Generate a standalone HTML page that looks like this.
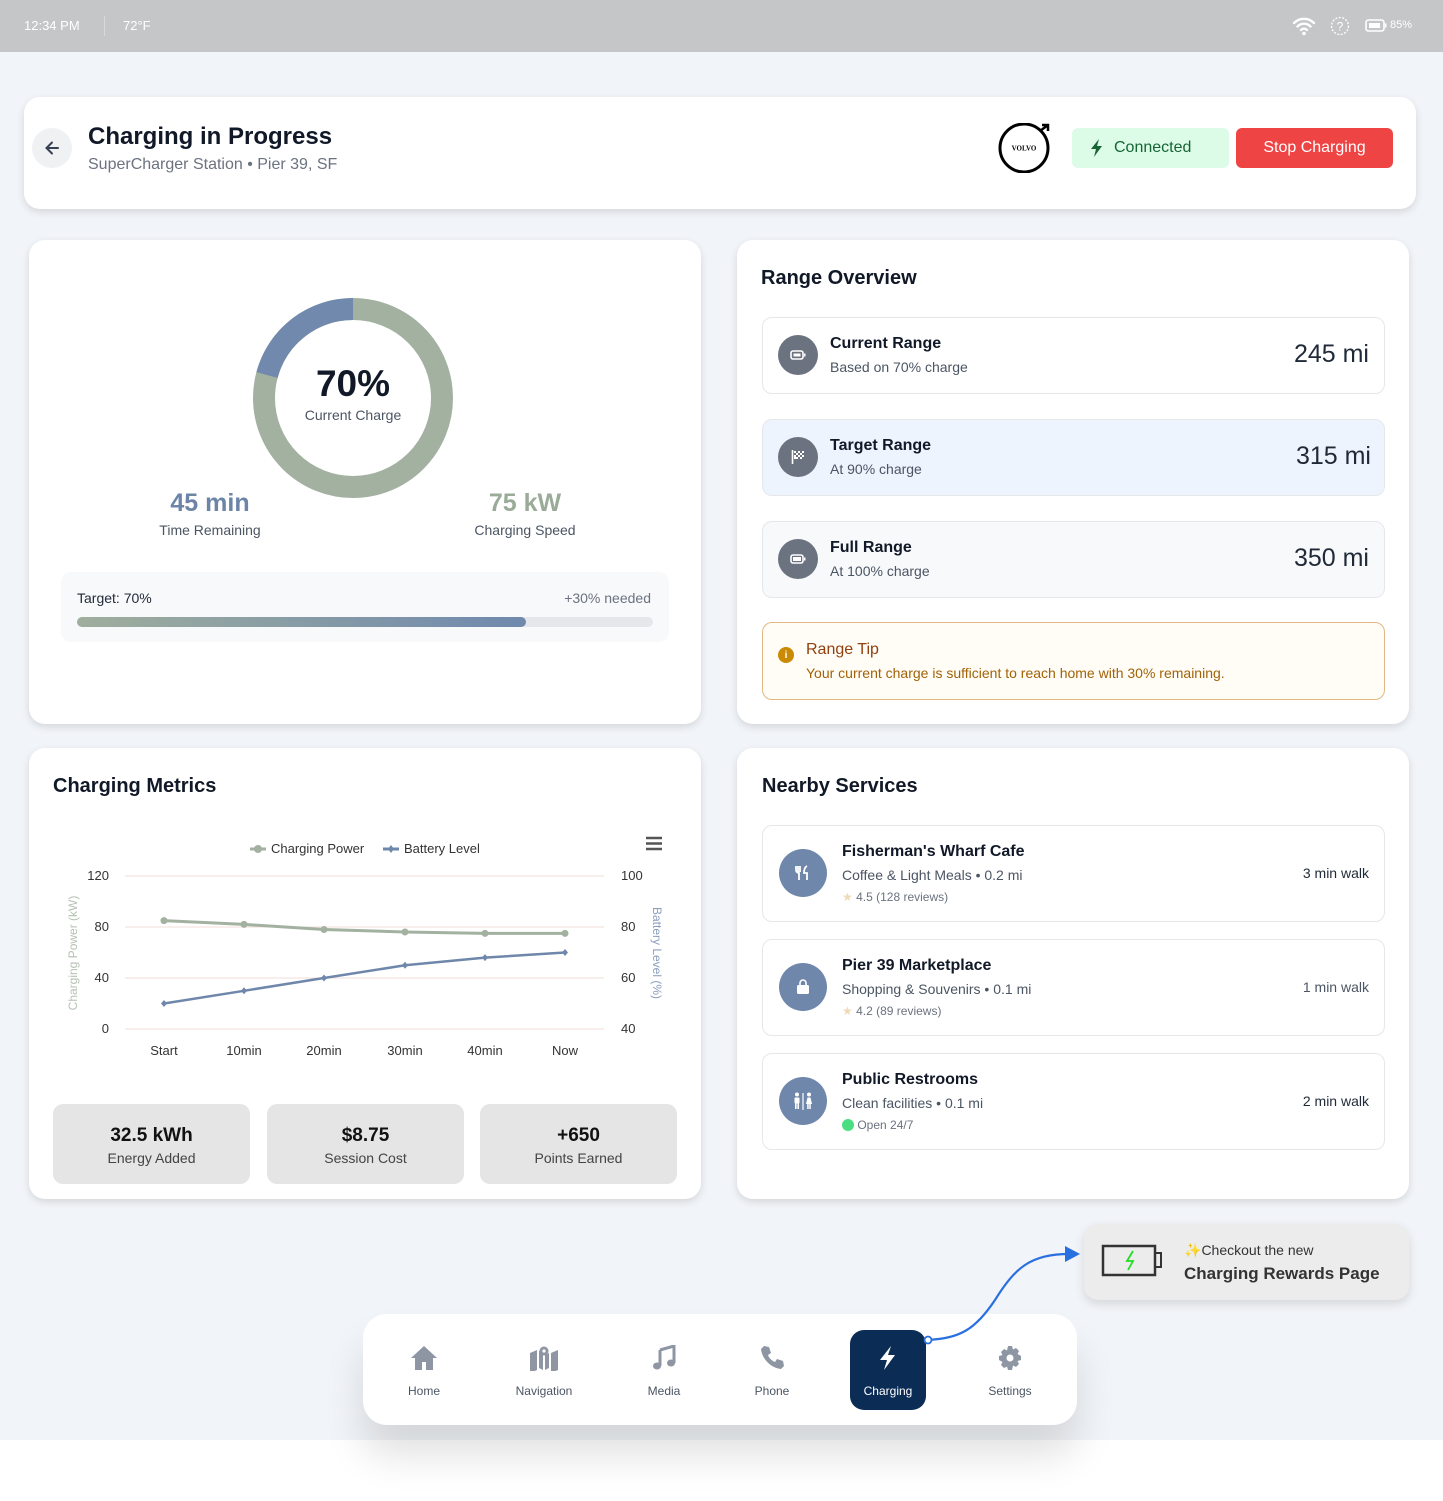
<!DOCTYPE html>
<html><head><meta charset="utf-8"><style>
*{box-sizing:border-box;margin:0;padding:0}
body{width:1443px;height:1501px;background:#fff;font-family:"Liberation Sans",sans-serif;position:relative;overflow:hidden;color:#111827}
.bg{position:absolute;left:0;top:0;width:1443px;height:1440px;background:#f1f4f8}
.status{position:absolute;left:0;top:0;width:1443px;height:52px;background:#c4c6c8;color:#fff;font-size:13px}
.abs{position:absolute}
.card{position:absolute;background:#fff;border-radius:16px;box-shadow:0 3px 8px rgba(0,0,0,.12)}
.row{position:absolute;left:762px;width:623px;border:1px solid #e5e7eb;border-radius:10px;background:#fff}
.ic{position:absolute;border-radius:50%;display:flex;align-items:center;justify-content:center}
.t1{font-weight:bold;font-size:16px;color:#111827}
.t2{font-size:14px;color:#4b5563}
.stat{position:absolute;top:1104px;width:197px;height:80px;background:#e5e5e5;border-radius:10px;text-align:center}
.stat b{display:block;font-size:19px;margin-top:21px;color:#111}
.stat span{display:block;font-size:14px;color:#444;margin-top:3px}
.nav{position:absolute;top:1345px;width:80px;text-align:center;font-size:12px;color:#4b5563}
.nav span{display:block;margin-top:20px}
</style></head><body>
<div class="bg"></div>
<div class="status">
<span class="abs" style="left:24px;top:18px">12:34 PM</span>
<span class="abs" style="left:104px;top:16px;width:1px;height:20px;background:#d8d9db"></span>
<span class="abs" style="left:123px;top:18px">72°F</span>
<svg class="abs" style="left:1292px;top:16px" width="24" height="20" viewBox="0 0 24 20"><path d="M2 7a14 14 0 0 1 20 0M5.5 10.5a9 9 0 0 1 13 0M9 14a4 4 0 0 1 6 0" stroke="#fff" stroke-width="2.4" fill="none" stroke-linecap="round"/><circle cx="12" cy="17.5" r="1.8" fill="#fff"/></svg>
<svg class="abs" style="left:1330px;top:16px" width="20" height="20"><circle cx="10" cy="10" r="8.5" stroke="#fff" stroke-width="1.3" fill="none" stroke-dasharray="2 1.5"/><text x="10" y="14.5" font-size="12" fill="#fff" text-anchor="middle" font-family="Liberation Sans">?</text></svg>
<svg class="abs" style="left:1365px;top:19px" width="22" height="13"><rect x="1" y="1" width="18" height="11" rx="2.5" stroke="#fff" stroke-width="1.6" fill="none"/><rect x="4" y="4" width="11" height="5" fill="#fff"/><rect x="20" y="4.5" width="1.5" height="4" fill="#fff"/></svg>
<span class="abs" style="left:1390px;top:19px;font-size:11px">85%</span>
</div>

<div class="card" style="left:24px;top:97px;width:1392px;height:112px">
<div class="abs" style="left:8px;top:31px;width:40px;height:40px;border-radius:50%;background:#f0f1f3"></div>
<svg class="abs" style="left:18px;top:41px" width="20" height="20"><path d="M16 10H5M10 4.5 4.5 10 10 15.5" stroke="#374151" stroke-width="2" fill="none" stroke-linecap="round"/></svg>
<div class="abs" style="left:64px;top:26px;font-size:24px;font-weight:bold;color:#111827">Charging in Progress</div>
<div class="abs" style="left:64px;top:59px;font-size:16px;color:#6b7280">SuperCharger Station • Pier 39, SF</div>
<svg class="abs" style="left:974px;top:26px" width="58" height="50"><circle cx="26" cy="25" r="24" stroke="#000" stroke-width="3" fill="#fff"/><path d="M42 8l8-6M44 2h6v6" stroke="#000" stroke-width="2.5" fill="none"/><text x="26" y="27.5" font-size="7" font-weight="bold" text-anchor="middle" font-family="Liberation Serif">VOLVO</text></svg>
<div class="abs" style="left:1048px;top:31px;width:157px;height:40px;background:#dcfce7;border-radius:6px;color:#166534;font-size:16px;line-height:40px;padding-left:42px">Connected</div>
<svg class="abs" style="left:1066px;top:42px" width="14" height="18"><path d="M9 0 1 10h5l-2 8 8-11H7z" fill="#166534"/></svg>
<div class="abs" style="left:1212px;top:31px;width:157px;height:40px;background:#ef4444;border-radius:6px;color:#fff;font-size:16px;line-height:40px;text-align:center">Stop Charging</div>
</div>

<div class="card" style="left:29px;top:240px;width:672px;height:484px"></div>
<svg class="abs" style="left:253px;top:298px" width="200" height="200"><circle cx="100" cy="100" r="89" stroke="#a3b1a1" stroke-width="22" fill="none"/><path d="M100 11A89 89 0 0 0 14 77" stroke="#7189ad" stroke-width="22" fill="none"/></svg>
<div class="abs" style="left:253px;top:363px;width:200px;text-align:center;font-size:37px;font-weight:bold;color:#111827">70%</div>
<div class="abs" style="left:253px;top:407px;width:200px;text-align:center;font-size:14px;color:#4b5563">Current Charge</div>
<div class="abs" style="left:110px;top:489px;width:200px;text-align:center;font-size:25px;font-weight:bold;color:#6c84a8">45 min</div>
<div class="abs" style="left:110px;top:522px;width:200px;text-align:center;font-size:14px;color:#4b5563">Time Remaining</div>
<div class="abs" style="left:425px;top:489px;width:200px;text-align:center;font-size:25px;font-weight:bold;color:#9aab98">75 kW</div>
<div class="abs" style="left:425px;top:522px;width:200px;text-align:center;font-size:14px;color:#4b5563">Charging Speed</div>
<div class="abs" style="left:61px;top:572px;width:608px;height:70px;background:#f8f9fb;border-radius:10px"></div>
<div class="abs" style="left:77px;top:590px;font-size:14px;color:#1f2937">Target: 70%</div>
<div class="abs" style="left:500px;top:590px;width:151px;text-align:right;font-size:14px;color:#6b7280">+30% needed</div>
<div class="abs" style="left:77px;top:617px;width:576px;height:10px;border-radius:5px;background:#e5e7eb"></div>
<div class="abs" style="left:77px;top:617px;width:449px;height:10px;border-radius:5px;background:linear-gradient(90deg,#9fae9d,#6f89ae)"></div>

<div class="card" style="left:737px;top:240px;width:672px;height:484px"></div>
<div class="abs t1" style="left:761px;top:267px;font-size:20px">Range Overview</div>
<div class="row" style="top:317px;height:77px"></div>
<div class="row" style="top:419px;height:77px;background:#eef4fe"></div>
<div class="row" style="top:521px;height:77px;background:#f8f9fb"></div>
<div class="ic" style="left:778px;top:335px;width:40px;height:40px;background:#6b7280"><svg width="16" height="10"><rect x="1" y="1" width="12" height="8" rx="2" stroke="#fff" stroke-width="1.6" fill="none"/><rect x="3.5" y="3.5" width="7" height="3" fill="#fff"/><rect x="14" y="3.5" width="1.5" height="3" fill="#fff"/></svg></div>
<div class="ic" style="left:778px;top:437px;width:40px;height:40px;background:#6b7280"><svg width="14" height="16"><path d="M1.5 1v14" stroke="#fff" stroke-width="1.6"/><rect x="3" y="2" width="10" height="8" fill="#fff"/><path d="M5 2h2v2H5zM9 2h2v2H9zM7 4h2v2H7zM11 4h2v2h-2zM5 6h2v2H5zM9 6h2v2H9zM3 4h2v2H3zM7 8h2v2H7zM11 8h2v2h-2z" fill="#6b7280"/></svg></div>
<div class="ic" style="left:778px;top:539px;width:40px;height:40px;background:#6b7280"><svg width="16" height="10"><rect x="1" y="1" width="12" height="8" rx="2" stroke="#fff" stroke-width="1.6" fill="none"/><rect x="3" y="3" width="8" height="4" fill="#fff"/><rect x="14" y="3.5" width="1.5" height="3" fill="#fff"/></svg></div>
<div class="abs t1" style="left:830px;top:335px">Current Range</div><div class="abs t2" style="left:830px;top:359px">Based on 70% charge</div>
<div class="abs t1" style="left:830px;top:437px">Target Range</div><div class="abs t2" style="left:830px;top:461px">At 90% charge</div>
<div class="abs t1" style="left:830px;top:539px">Full Range</div><div class="abs t2" style="left:830px;top:563px">At 100% charge</div>
<div class="abs" style="left:1200px;top:340px;width:169px;text-align:right;font-size:25px;color:#1f2937">245 mi</div>
<div class="abs" style="left:1200px;top:442px;width:171px;text-align:right;font-size:25px;color:#1f2937">315 mi</div>
<div class="abs" style="left:1200px;top:544px;width:169px;text-align:right;font-size:25px;color:#1f2937">350 mi</div>
<div class="abs" style="left:762px;top:622px;width:623px;height:78px;border:1px solid #e2b884;border-radius:10px;background:#fffdf6"></div>
<div class="ic" style="left:778px;top:647px;width:16px;height:16px;background:#ca8a04;color:#fff;font-size:10px;font-weight:bold">i</div>
<div class="abs" style="left:806px;top:641px;font-size:16px;color:#92400e">Range Tip</div>
<div class="abs" style="left:806px;top:665px;font-size:14px;color:#a16207">Your current charge is sufficient to reach home with 30% remaining.</div>

<div class="card" style="left:29px;top:748px;width:672px;height:451px"></div>
<div class="abs t1" style="left:53px;top:775px;font-size:20px">Charging Metrics</div>
<svg class="abs" style="left:0;top:820px" width="700" height="260" font-family="Liberation Sans" font-size="13">
<g transform="translate(0,-820)">
<g stroke="#f0ddd8"><path d="M125 876H604M125 927H604M125 978H604M125 1029H604"/></g>
<g fill="#333" text-anchor="end"><text x="109" y="880">120</text><text x="109" y="931">80</text><text x="109" y="982">40</text><text x="109" y="1033">0</text></g>
<g fill="#333"><text x="621" y="880">100</text><text x="621" y="931">80</text><text x="621" y="982">60</text><text x="621" y="1033">40</text></g>
<g fill="#333" text-anchor="middle"><text x="164" y="1055">Start</text><text x="244" y="1055">10min</text><text x="324" y="1055">20min</text><text x="405" y="1055">30min</text><text x="485" y="1055">40min</text><text x="565" y="1055">Now</text></g>
<text transform="translate(77,953) rotate(-90)" fill="#b4c1b2" text-anchor="middle" font-size="12">Charging Power (kW)</text>
<text transform="translate(653,953) rotate(90)" fill="#8c9fbd" text-anchor="middle" font-size="12">Battery Level (%)</text>
<path d="M164 920.6L244 924.4L324 929.5L405 932L485 933.4L565 933.4" stroke="#a3b1a1" stroke-width="3" fill="none"/>
<g fill="#a3b1a1"><circle cx="164" cy="920.6" r="3.5"/><circle cx="244" cy="924.4" r="3.5"/><circle cx="324" cy="929.5" r="3.5"/><circle cx="405" cy="932" r="3.5"/><circle cx="485" cy="933.4" r="3.5"/><circle cx="565" cy="933.4" r="3.5"/></g>
<path d="M164 1003.5L244 990.8L324 978L405 965.3L485 957.6L565 952.5" stroke="#6f87ab" stroke-width="2.5" fill="none"/>
<g fill="#6f87ab"><path d="M164 1000l3 3.5-3 3.5-3-3.5zM244 987.3l3 3.5-3 3.5-3-3.5zM324 974.5l3 3.5-3 3.5-3-3.5zM405 961.8l3 3.5-3 3.5-3-3.5zM485 954.1l3 3.5-3 3.5-3-3.5zM565 949l3 3.5-3 3.5-3-3.5z"/></g>
<path d="M250 849h16" stroke="#a3b1a1" stroke-width="3"/><circle cx="258" cy="849" r="4" fill="#a3b1a1"/>
<text x="271" y="853" fill="#333">Charging Power</text>
<path d="M383 849h16" stroke="#6f87ab" stroke-width="3"/><path d="M391 845l3 4-3 4-3-4z" fill="#6f87ab"/>
<text x="404" y="853" fill="#333">Battery Level</text>
<path d="M646 838h16M646 843.5h16M646 849h16" stroke="#555" stroke-width="2.5"/>
</g></svg>
<div class="stat" style="left:53px"><b>32.5 kWh</b><span>Energy Added</span></div>
<div class="stat" style="left:267px"><b>$8.75</b><span>Session Cost</span></div>
<div class="stat" style="left:480px"><b>+650</b><span>Points Earned</span></div>

<div class="card" style="left:737px;top:748px;width:672px;height:451px"></div>
<div class="abs t1" style="left:762px;top:775px;font-size:20px">Nearby Services</div>
<div class="row" style="top:825px;height:97px"></div>
<div class="row" style="top:939px;height:97px"></div>
<div class="row" style="top:1053px;height:97px"></div>
<div class="ic" style="left:779px;top:849px;width:48px;height:48px;background:#6f87ab"><svg width="16" height="16"><path d="M3 1v6M5 1v6M1 1v4a3 3 0 0 0 3 3v7M12 1c-2 1-3 4-3 7h3v7" stroke="#fff" stroke-width="1.8" fill="none"/></svg></div>
<div class="ic" style="left:779px;top:963px;width:48px;height:48px;background:#6f87ab"><svg width="14" height="16"><path d="M4 6V4a3 3 0 0 1 6 0v2" stroke="#fff" stroke-width="1.6" fill="none"/><rect x="1" y="6" width="12" height="9" rx="1.5" fill="#fff"/></svg></div>
<div class="ic" style="left:779px;top:1077px;width:48px;height:48px;background:#6f87ab"><svg width="22" height="18"><circle cx="5" cy="2.5" r="2" fill="#fff"/><rect x="2.5" y="5.5" width="5" height="6" rx="1" fill="#fff"/><rect x="3" y="11" width="1.6" height="6" fill="#fff"/><rect x="5.4" y="11" width="1.6" height="6" fill="#fff"/><path d="M11 1v17" stroke="#fff" stroke-width="1.2"/><circle cx="17" cy="2.5" r="2" fill="#fff"/><path d="M14 12l1.5-6.5h3L20 12z" fill="#fff"/><rect x="15.2" y="12" width="1.5" height="5" fill="#fff"/><rect x="17.3" y="12" width="1.5" height="5" fill="#fff"/></svg></div>
<div class="abs t1" style="left:842px;top:843px">Fisherman's Wharf Cafe</div>
<div class="abs t2" style="left:842px;top:867px">Coffee &amp; Light Meals • 0.2 mi</div>
<div class="abs" style="left:842px;top:890px;font-size:12px;color:#6b7280"><span style="color:#f0d9b5">★</span> 4.5 (128 reviews)</div>
<div class="abs" style="left:1200px;top:865px;width:169px;text-align:right;font-size:14px;color:#1f2937">3 min walk</div>
<div class="abs t1" style="left:842px;top:957px">Pier 39 Marketplace</div>
<div class="abs t2" style="left:842px;top:981px">Shopping &amp; Souvenirs • 0.1 mi</div>
<div class="abs" style="left:842px;top:1004px;font-size:12px;color:#6b7280"><span style="color:#f0d9b5">★</span> 4.2 (89 reviews)</div>
<div class="abs" style="left:1200px;top:979px;width:169px;text-align:right;font-size:14px;color:#4b5563">1 min walk</div>
<div class="abs t1" style="left:842px;top:1071px">Public Restrooms</div>
<div class="abs t2" style="left:842px;top:1095px">Clean facilities • 0.1 mi</div>
<div class="abs" style="left:842px;top:1118px;font-size:12px;color:#6b7280"><span style="display:inline-block;width:12px;height:12px;border-radius:50%;background:#4ade80;vertical-align:-2px"></span> Open 24/7</div>
<div class="abs" style="left:1200px;top:1093px;width:169px;text-align:right;font-size:14px;color:#1f2937">2 min walk</div>

<div class="abs" style="left:1084px;top:1224px;width:325px;height:76px;background:#ececec;border-radius:14px;box-shadow:0 4px 10px rgba(0,0,0,.12)"></div>
<svg class="abs" style="left:1100px;top:1244px" width="66" height="34"><rect x="3" y="2" width="52" height="29" stroke="#333" stroke-width="2.5" fill="none"/><rect x="55" y="9" width="6" height="14" stroke="#333" stroke-width="2" fill="none"/><path d="M33 7l-6 10h6l-5 9" stroke="#22dd22" stroke-width="1.8" fill="none"/></svg>
<div class="abs" style="left:1184px;top:1242px;font-size:14px;color:#333"><span style="color:#f5d34a">✨</span>Checkout the new</div>
<div class="abs" style="left:1184px;top:1264px;font-size:17px;font-weight:bold;color:#333">Charging Rewards Page</div>

<div class="abs" style="left:363px;top:1314px;width:714px;height:111px;background:#fff;border-radius:24px;box-shadow:0 30px 40px rgba(0,0,0,.12)"></div>
<div class="abs" style="left:850px;top:1330px;width:76px;height:80px;background:#0b2d55;border-radius:14px"></div>
<div class="nav" style="left:384px"><svg width="28" height="26" viewBox="0 0 28 26"><path d="M14 1 1 13h4v12h7v-8h4v8h7V13h4z" fill="#8e96a3"/></svg><span style="margin-top:10px">Home</span></div>
<div class="nav" style="left:504px;width:80px"><svg width="30" height="26" viewBox="0 0 30 26"><path d="M1 8l7-3v20l-7 3zM22 8l7-3v20l-7 3zM10 6l4 2v17l-4-2zM16 10l4-2v15l-4 2z" fill="#8e96a3"/><circle cx="15" cy="6" r="4.5" fill="#8e96a3"/><circle cx="15" cy="6" r="1.6" fill="#fff"/></svg><span style="margin-top:10px">Navigation</span></div>
<div class="nav" style="left:624px"><svg width="26" height="26" viewBox="0 0 26 26"><path d="M9 5l14-4v17" stroke="#8e96a3" stroke-width="3" fill="none"/><path d="M9 5v16" stroke="#8e96a3" stroke-width="3"/><ellipse cx="6" cy="21" rx="4" ry="3.5" fill="#8e96a3"/><ellipse cx="20" cy="18" rx="4" ry="3.5" fill="#8e96a3"/></svg><span style="margin-top:10px">Media</span></div>
<div class="nav" style="left:732px"><svg width="26" height="26" viewBox="0 0 26 26"><path d="M5 1l5 1 2 6-3 2c1 3 4 6 7 7l2-3 6 2 1 5-3 3C12 23 3 14 2 4z" fill="#8e96a3"/></svg><span style="margin-top:10px">Phone</span></div>
<div class="nav" style="left:848px;color:#fff"><svg width="22" height="26" viewBox="0 0 22 26"><path d="M14 1 3 15h7l-3 10 11-15h-7z" fill="#fff"/></svg><span style="margin-top:10px">Charging</span></div>
<div class="nav" style="left:970px"><svg width="26" height="26" viewBox="0 0 26 26"><path d="M11 1h4l1 3.5 3-1.5 3 3-1.5 3L24 11v4l-3.5 1 1.5 3-3 3-3-1.5L15 25h-4l-1-3.5L7 23l-3-3 1.5-3L2 15v-4l3.5-1L4 7l3-3 3 1.5z" fill="#8e96a3"/><circle cx="13" cy="13" r="3.5" fill="#fff"/></svg><span style="margin-top:10px">Settings</span></div>

<svg class="abs" style="left:920px;top:1240px" width="170" height="110"><path d="M8 100C40 98 55 90 75 60C95 28 110 14 150 14" stroke="#2a6fe0" stroke-width="2.2" fill="none"/><path d="M160 14l-15-8v16z" fill="#2a6fe0"/><circle cx="8" cy="100" r="3.5" fill="#fff" stroke="#2a6fe0" stroke-width="1.8"/></svg>
</body></html>
